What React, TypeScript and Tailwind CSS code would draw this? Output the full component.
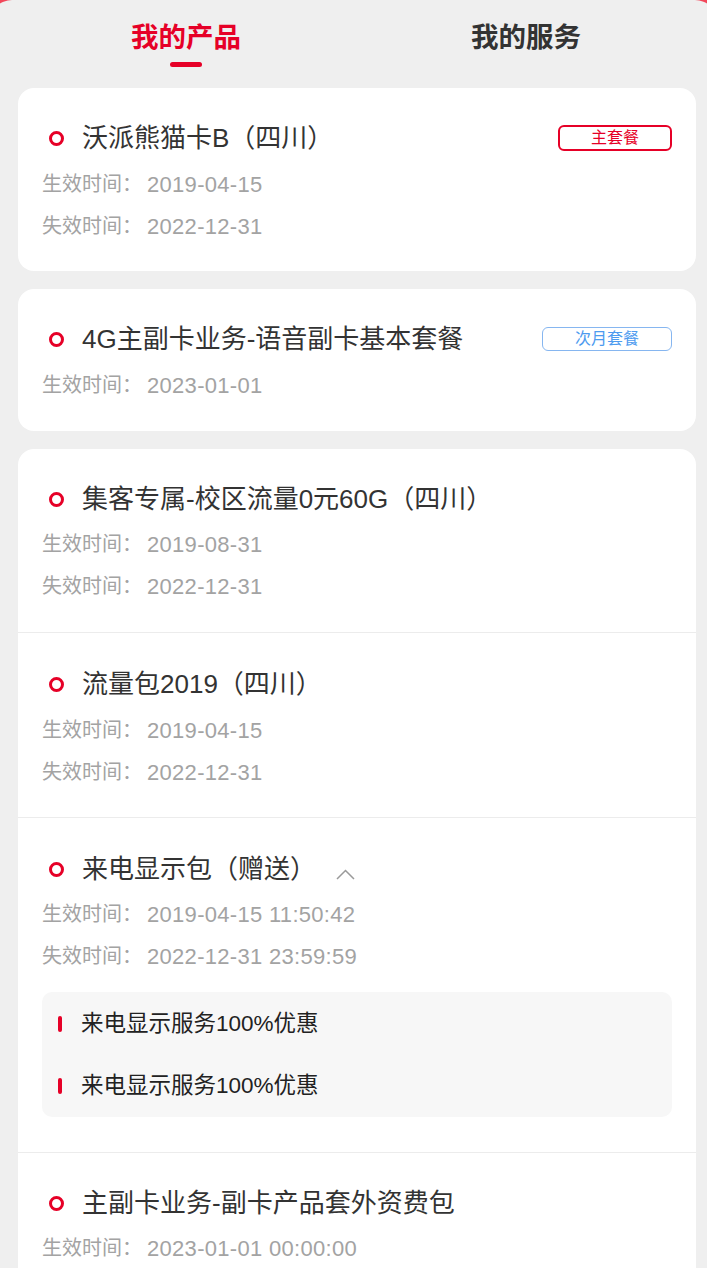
import React from "react";

const font = { fontFamily: '"Liberation Sans", "Noto Sans CJK SC", sans-serif' };

function Ring() {
  return <span className="ml-[7px] mr-[18px] box-border inline-block h-[15px] w-[15px] shrink-0 rounded-full border-[3px] border-[#e60027]" />;
}

function Title({ text, extra }: { text: string; extra?: React.ReactNode }) {
  return (
    <div className="flex h-[34px] items-center">
      <Ring />
      <span className="text-[26px] leading-[34px] text-[#333333]">{text}</span>
      {extra}
    </div>
  );
}

function Row({ label, value }: { label: string; value: string }) {
  return (
    <div className="flex h-[42px] items-center text-[#a3a3a3]">
      <span className="text-[20px]">{label}：</span>
      <span className="ml-[5px] text-[22px] tracking-[0.3px]">{value}</span>
    </div>
  );
}

function Tag({ text, tone }: { text: string; tone: "red" | "blue" }) {
  return tone === "red" ? (
    <span className="ml-auto flex h-[26px] items-center rounded-[6px] border-[2px] border-[#e60027] px-[31px] text-[16px] leading-none text-[#e60027]">
      {text}
    </span>
  ) : (
    <span className="ml-auto flex h-[24px] items-center rounded-[6px] border border-[#86b6f0] px-[32px] text-[16px] leading-none text-[#4d9bef]">
      {text}
    </span>
  );
}

function ChevronUp() {
  return (
    <svg className="ml-[20px] mt-[10px]" width="19" height="11" viewBox="0 0 19 11" fill="none">
      <path d="M1 10 L9.5 1.5 L18 10" stroke="#9a9a9a" strokeWidth="1.5" />
    </svg>
  );
}

function Benefit({ text }: { text: string }) {
  return (
    <div className="flex h-[62px] items-center">
      <span className="ml-[16px] mr-[19px] inline-block h-[16px] w-[4px] rounded-full bg-[#e60027]" />
      <span className="text-[22.5px] text-[#222222]">{text}</span>
    </div>
  );
}

export default function App() {
  return (
    <div className="h-[1280px] w-[707px] overflow-hidden bg-white" style={font}>
      <div className="h-[1268px] overflow-hidden bg-[#f2475a]">
        <div className="-ml-[10px] h-[1268px] w-[727px] rounded-t-[22px] bg-[#efefef] pl-[10px]">
          {/* tabs */}
          <div className="ml-[16px] flex w-[680px] pt-[18px]">
            <div className="flex w-[340px] flex-col items-center">
              <span className="text-[27.5px] font-semibold leading-[40px] text-[#e60027]">我的产品</span>
              <span className="mt-[4px] block h-[5px] w-[32px] rounded-full bg-[#e60027]" />
            </div>
            <div className="flex w-[340px] flex-col items-center">
              <span className="text-[27.5px] font-semibold leading-[40px] text-[#333333]">我的服务</span>
            </div>
          </div>

          <div className="ml-[18px] mt-[21px] flex w-[678px] flex-col gap-[18px]">
            <div className="rounded-[16px] bg-white px-[24px] pb-[24px] pt-[33px]">
              <Title text="沃派熊猫卡B（四川）" extra={<Tag text="主套餐" tone="red" />} />
              <div className="mt-[8px]">
                <Row label="生效时间" value="2019-04-15" />
                <Row label="失效时间" value="2022-12-31" />
              </div>
            </div>

            <div className="rounded-[16px] bg-white px-[24px] pb-[25px] pt-[33px]">
              <Title text="4G主副卡业务-语音副卡基本套餐" extra={<Tag text="次月套餐" tone="blue" />} />
              <div className="mt-[8px]">
                <Row label="生效时间" value="2023-01-01" />
              </div>
            </div>

            <div className="rounded-t-[16px] bg-white">
              <div className="border-b border-[#ececec] px-[24px] pb-[25px] pt-[33px]">
                <Title text="集客专属-校区流量0元60G（四川）" />
                <div className="mt-[7px]">
                  <Row label="生效时间" value="2019-08-31" />
                  <Row label="失效时间" value="2022-12-31" />
                </div>
              </div>
              <div className="border-b border-[#ececec] px-[24px] pb-[24px] pt-[34px]">
                <Title text="流量包2019（四川）" />
                <div className="mt-[8px]">
                  <Row label="生效时间" value="2019-04-15" />
                  <Row label="失效时间" value="2022-12-31" />
                </div>
              </div>
              <div className="border-b border-[#ececec] px-[24px] pb-[35px] pt-[34px]">
                <Title text="来电显示包（赠送）" extra={<ChevronUp />} />
                <div className="mt-[7px]">
                  <Row label="生效时间" value="2019-04-15 11:50:42" />
                  <Row label="失效时间" value="2022-12-31 23:59:59" />
                </div>
                <div className="mt-[15px] rounded-[10px] bg-[#f7f7f7] pt-px">
                  <Benefit text="来电显示服务100%优惠" />
                  <Benefit text="来电显示服务100%优惠" />
                </div>
              </div>
              <div className="px-[24px] pb-[25px] pt-[33px]">
                <Title text="主副卡业务-副卡产品套外资费包" />
                <div className="mt-[7px]">
                  <Row label="生效时间" value="2023-01-01 00:00:00" />
                </div>
              </div>
            </div>
          </div>
        </div>
      </div>
    </div>
  );
}
